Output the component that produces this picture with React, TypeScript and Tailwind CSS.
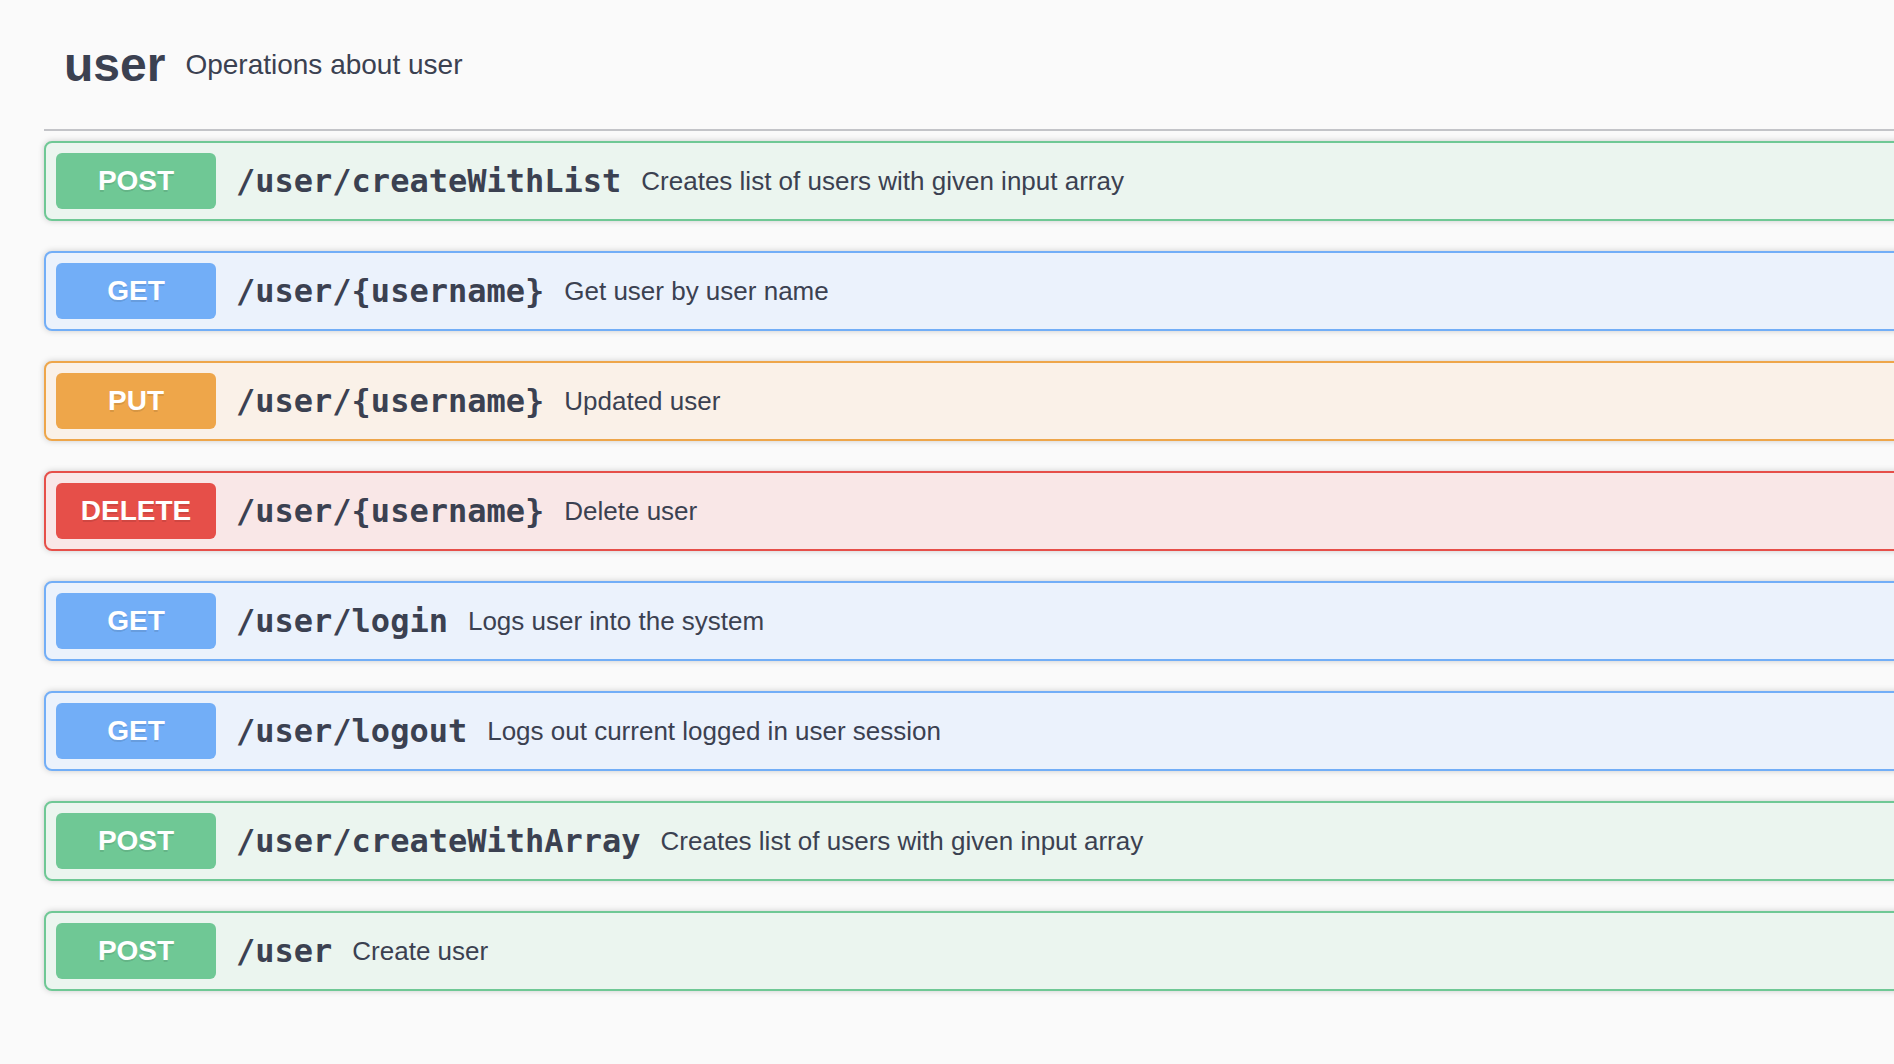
type Method = "POST" | "GET" | "PUT" | "DELETE";

type Operation = {
  method: Method;
  path: string;
  summary: string;
};

const METHOD_STYLE: Record<Method, { box: string; badge: string }> = {
  POST: { box: "border-[#6fc895] bg-[#ebf5ef]", badge: "bg-[#6fc895]" },
  GET: { box: "border-[#72aef7] bg-[#ebf2fc]", badge: "bg-[#72aef7]" },
  PUT: { box: "border-[#eea64a] bg-[#faf1e8]", badge: "bg-[#eea64a]" },
  DELETE: { box: "border-[#e64f49] bg-[#f9e7e7]", badge: "bg-[#e64f49]" },
};

const OPERATIONS: Operation[] = [
  { method: "POST", path: "/user/createWithList", summary: "Creates list of users with given input array" },
  { method: "GET", path: "/user/{username}", summary: "Get user by user name" },
  { method: "PUT", path: "/user/{username}", summary: "Updated user" },
  { method: "DELETE", path: "/user/{username}", summary: "Delete user" },
  { method: "GET", path: "/user/login", summary: "Logs user into the system" },
  { method: "GET", path: "/user/logout", summary: "Logs out current logged in user session" },
  { method: "POST", path: "/user/createWithArray", summary: "Creates list of users with given input array" },
  { method: "POST", path: "/user", summary: "Create user" },
];

function OperationRow({ op }: { op: Operation }) {
  const s = METHOD_STYLE[op.method];
  return (
    <div className={`mb-[30px] rounded-lg border-2 p-[10px] shadow-[0_0_6px_rgba(0,0,0,0.19)] ${s.box}`}>
      <div className="flex items-center">
        <span
          className={`flex h-[56px] min-w-[160px] items-center justify-center rounded-md text-[28px] font-bold text-white [text-shadow:0_2px_0_rgba(0,0,0,0.1)] ${s.badge}`}
        >
          {op.method}
        </span>
        <span className="px-5 font-['DejaVu_Sans_Mono',monospace] text-[32px] font-semibold text-[#3b4151]">
          {op.path}
        </span>
        <span className="text-[26px] text-[#3b4151]">{op.summary}</span>
      </div>
    </div>
  );
}

export default function App() {
  return (
    <div className="min-h-screen w-full overflow-hidden bg-[#fafafa] font-['Liberation_Sans',Arial,sans-serif]">
      <div className="ml-[44px] w-[1880px]">
        <div className="flex h-[131px] items-center border-b-2 border-[#c3c4c8] pl-5">
          <h3 className="text-[48px] font-bold text-[#3b4151]">user</h3>
          <span className="px-5 text-[28px] text-[#3b4151]">Operations about user</span>
        </div>
        <div className="mt-[10px]">
          {OPERATIONS.map((op, i) => (
            <OperationRow key={i} op={op} />
          ))}
        </div>
      </div>
    </div>
  );
}
